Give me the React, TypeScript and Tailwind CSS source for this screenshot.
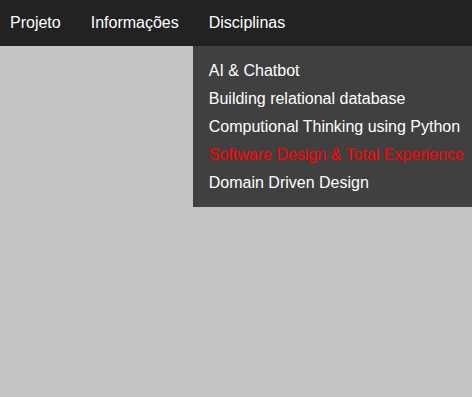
const NAV_ITEMS = ['Projeto', 'Informações', 'Disciplinas']

const SUBJECTS = [
  { name: 'AI & Chatbot', active: false },
  { name: 'Building relational database', active: false },
  { name: 'Computional Thinking using Python', active: false },
  { name: 'Software Design & Total Experience', active: true },
  { name: 'Domain Driven Design', active: false },
]

export default function App() {
  return (
    <div
      className="h-[397px] w-full overflow-hidden bg-[#c3c3c3] text-[16px]"
      style={{ fontFamily: '"Liberation Sans", Arial, sans-serif' }}
    >
      <nav className="h-[46px] bg-[#222222]">
        <ul className="flex h-full items-center pl-[10px] gap-[30px]">
          {NAV_ITEMS.map(item => (
            <li key={item} className="relative h-full flex items-center">
              <a href="#" className="text-white leading-none">{item}</a>

              {item === 'Disciplinas' && (
                <ul className="absolute top-full left-[-16px] w-[279px] bg-[#404040] pt-[11px] pb-[10px] z-10">
                  {SUBJECTS.map(s => (
                    <li key={s.name} className="h-[28px] flex items-center pl-[16px] whitespace-nowrap">
                      <a href="#" className={s.active ? 'text-[#ff0000]' : 'text-white'}>
                        {s.name}
                      </a>
                    </li>
                  ))}
                </ul>
              )}
            </li>
          ))}
        </ul>
      </nav>
    </div>
  )
}
